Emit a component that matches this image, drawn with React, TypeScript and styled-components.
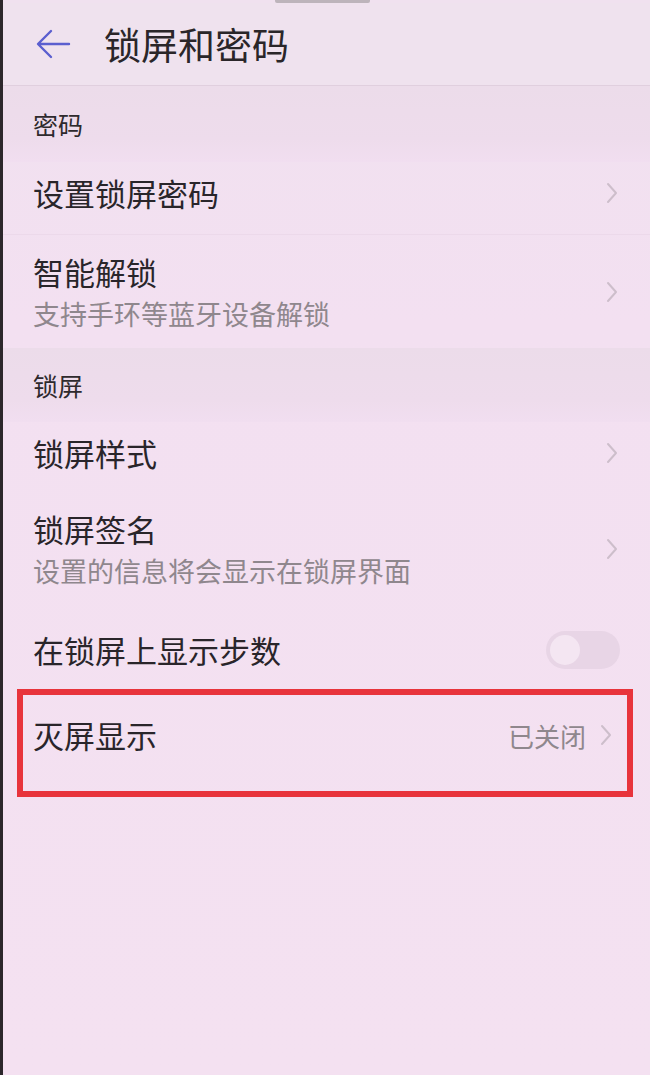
import React from "react";
import styled, { createGlobalStyle } from "styled-components";

const GlobalStyle = createGlobalStyle`
  html, body {
    margin: 0;
    padding: 0;
    background: #f4e1f1;
  }
  body {
    font-family: "Noto Sans CJK SC", "Noto Sans", sans-serif;
  }
`;

const Screen = styled.div`
  width: 650px;
  height: 1075px;
  box-sizing: border-box;
  border-left: 3px solid #2c272b;
  background: linear-gradient(180deg, #f0e1ef 0%, #f3e0f1 30%, #f4e1f1 100%);
  overflow: hidden;
`;

const StatusNub = styled.div`
  width: 95px;
  height: 3px;
  margin-left: 272px;
  background: #bdb4bb;
  border-radius: 0 0 2px 2px;
`;

const Header = styled.header`
  height: 82px;
  display: flex;
  align-items: center;
  padding-left: 32px;
  border-bottom: 1px solid #e0cfde;
  background: #efe2ee;
`;

const BackButton = styled.span`
  display: flex;
  width: 36px;
  height: 34px;
  margin-right: 33px;
`;

const Title = styled.h1`
  margin: 0;
  font-size: 37px;
  font-weight: 400;
  color: #2a2629;
`;

const SectionHeader = styled.div<{ $h: number }>`
  height: ${(p) => p.$h}px;
  display: flex;
  align-items: center;
  padding-left: 30px;
  font-size: 25px;
  color: #2e2a2d;
  background: linear-gradient(180deg, #ecdcea 0%, #eedcec 70%, #f1def0 100%);
`;

const Row = styled.div<{ $h: number; $divider?: boolean; $pb?: number }>`
  height: ${(p) => p.$h}px;
  box-sizing: border-box;
  display: flex;
  align-items: center;
  padding: 0 32px ${(p) => p.$pb ?? 0}px 30px;
  border-bottom: ${(p) => (p.$divider ? "1px solid #ecd9ea" : "none")};
`;

const Texts = styled.div`
  flex: 1;
  display: flex;
  flex-direction: column;
`;

const Label = styled.div`
  font-size: 31px;
  line-height: 40px;
  color: #29252a;
`;

const Sub = styled.div`
  font-size: 27px;
  line-height: 36px;
  color: #8f878d;
  margin-top: 4px;
`;

const Value = styled.span`
  font-size: 26px;
  color: #8f878d;
  margin-right: 14px;
`;

const Chevron = styled.span`
  display: flex;
  width: 12px;
  height: 22px;
`;

const Toggle = styled.div`
  width: 74px;
  height: 38px;
  border-radius: 19px;
  background: #e8d5e6;
  display: flex;
  align-items: center;
  padding-left: 4px;
  box-sizing: border-box;
  margin-right: -2px;
`;

const Knob = styled.div`
  width: 30px;
  height: 30px;
  border-radius: 50%;
  background: #f4e6f2;
`;

const Highlight = styled.div`
  margin: 0 17px 0 14px;
  height: 108px;
  box-sizing: border-box;
  border: 6px solid #e8343c;
  display: flex;
  align-items: center;
  padding: 0 15px 16px 10px;
`;

const ArrowIcon = () => (
  <svg width="36" height="34" viewBox="0 0 36 34" fill="none">
    <path
      d="M34 17H4M16 4L3 17l13 13"
      stroke="#5b5fcf"
      strokeWidth="2.4"
      strokeLinecap="round"
      strokeLinejoin="round"
    />
  </svg>
);

const ChevronIcon = () => (
  <Chevron>
    <svg width="12" height="22" viewBox="0 0 12 22" fill="none">
      <path d="M2 2l8 9-8 9" stroke="#cdbecb" strokeWidth="2" strokeLinecap="round" strokeLinejoin="round" />
    </svg>
  </Chevron>
);

export default function App() {
  return (
    <>
      <GlobalStyle />
      <Screen>
        <StatusNub />
        <Header>
          <BackButton>
            <ArrowIcon />
          </BackButton>
          <Title>锁屏和密码</Title>
        </Header>

        <SectionHeader $h={76}>密码</SectionHeader>
        <Row $h={73} $pb={11} $divider>
          <Texts>
            <Label>设置锁屏密码</Label>
          </Texts>
          <ChevronIcon />
        </Row>
        <Row $h={113}>
          <Texts>
            <Label>智能解锁</Label>
            <Sub>支持手环等蓝牙设备解锁</Sub>
          </Texts>
          <ChevronIcon />
        </Row>

        <SectionHeader $h={74}>锁屏</SectionHeader>
        <Row $h={70} $pb={9}>
          <Texts>
            <Label>锁屏样式</Label>
          </Texts>
          <ChevronIcon />
        </Row>
        <Row $h={118} $pb={4}>
          <Texts>
            <Label>锁屏签名</Label>
            <Sub>设置的信息将会显示在锁屏界面</Sub>
          </Texts>
          <ChevronIcon />
        </Row>
        <Row $h={79}>
          <Texts>
            <Label>在锁屏上显示步数</Label>
          </Texts>
          <Toggle>
            <Knob />
          </Toggle>
        </Row>
        <Highlight>
          <Texts>
            <Label>灭屏显示</Label>
          </Texts>
          <Value>已关闭</Value>
          <ChevronIcon />
        </Highlight>
      </Screen>
    </>
  );
}
